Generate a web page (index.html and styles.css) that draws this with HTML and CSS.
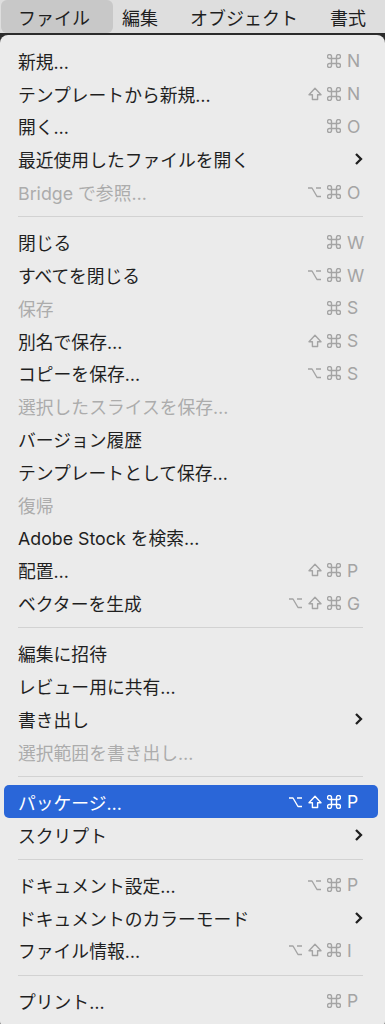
FILE: index.html
```html
<!DOCTYPE html>
<html lang="ja">
<head>
    <meta charset="UTF-8">
    <meta name="viewport" content="width=device-width, initial-scale=1.0">
    <title>ファイル メニュー</title>
    <link rel="stylesheet" href="styles.css">
</head>
<body>
    <!-- キー記号 -->
    <svg class="defs" width="0" height="0">
        <symbol id="cmd" viewBox="0 0 14 14">
            <path d="M4.5 4.5 V2.5 A2 2 0 1 0 2.5 4.5 H11.5 A2 2 0 1 0 9.5 2.5 V11.5 A2 2 0 1 0 11.5 9.5 H2.5 A2 2 0 1 0 4.5 11.5 Z"/>
        </symbol>
        <symbol id="opt" viewBox="0 0 15 14">
            <path d="M1 3 H5 L10 11.5 H14 M9 3 H14"/>
        </symbol>
        <symbol id="shift" viewBox="0 0 14 14">
            <path d="M7 1.3 L13 7.8 H9.6 V12.5 H4.4 V7.8 H1 Z"/>
        </symbol>
    </svg>

    <!-- メニューバー -->
    <div class="menubar">
        <span class="menubar-item active">ファイル</span>
        <span class="menubar-item">編集</span>
        <span class="menubar-item">オブジェクト</span>
        <span class="menubar-item">書式</span>
    </div>

    <!-- ファイル メニュー -->
    <div class="menu">
        <div class="item"><span class="label">新規…</span><span class="shortcut"><svg class="mod"><use href="#cmd"/></svg><span class="key">N</span></span></div>
        <div class="item"><span class="label">テンプレートから新規…</span><span class="shortcut"><svg class="mod"><use href="#shift"/></svg><svg class="mod"><use href="#cmd"/></svg><span class="key">N</span></span></div>
        <div class="item"><span class="label">開く…</span><span class="shortcut"><svg class="mod"><use href="#cmd"/></svg><span class="key">O</span></span></div>
        <div class="item"><span class="label">最近使用したファイルを開く</span><svg class="chevron" viewBox="0 0 9 14"><path d="M2 2 L7 7 L2 12"/></svg></div>
        <div class="item disabled"><span class="label">Bridge で参照…</span><span class="shortcut"><svg class="mod opt"><use href="#opt"/></svg><svg class="mod"><use href="#cmd"/></svg><span class="key">O</span></span></div>
        <div class="sep"></div>

        <div class="item"><span class="label">閉じる</span><span class="shortcut"><svg class="mod"><use href="#cmd"/></svg><span class="key">W</span></span></div>
        <div class="item"><span class="label">すべてを閉じる</span><span class="shortcut"><svg class="mod opt"><use href="#opt"/></svg><svg class="mod"><use href="#cmd"/></svg><span class="key">W</span></span></div>
        <div class="item disabled"><span class="label">保存</span><span class="shortcut"><svg class="mod"><use href="#cmd"/></svg><span class="key">S</span></span></div>
        <div class="item"><span class="label">別名で保存…</span><span class="shortcut"><svg class="mod"><use href="#shift"/></svg><svg class="mod"><use href="#cmd"/></svg><span class="key">S</span></span></div>
        <div class="item"><span class="label">コピーを保存…</span><span class="shortcut"><svg class="mod opt"><use href="#opt"/></svg><svg class="mod"><use href="#cmd"/></svg><span class="key">S</span></span></div>
        <div class="item disabled"><span class="label">選択したスライスを保存…</span></div>
        <div class="item"><span class="label">バージョン履歴</span></div>
        <div class="item"><span class="label">テンプレートとして保存…</span></div>
        <div class="item disabled"><span class="label">復帰</span></div>
        <div class="item"><span class="label">Adobe Stock を検索…</span></div>
        <div class="item"><span class="label">配置…</span><span class="shortcut"><svg class="mod"><use href="#shift"/></svg><svg class="mod"><use href="#cmd"/></svg><span class="key">P</span></span></div>
        <div class="item"><span class="label">ベクターを生成</span><span class="shortcut"><svg class="mod opt"><use href="#opt"/></svg><svg class="mod"><use href="#shift"/></svg><svg class="mod"><use href="#cmd"/></svg><span class="key">G</span></span></div>
        <div class="sep"></div>

        <div class="item"><span class="label">編集に招待</span></div>
        <div class="item"><span class="label">レビュー用に共有…</span></div>
        <div class="item"><span class="label">書き出し</span><svg class="chevron" viewBox="0 0 9 14"><path d="M2 2 L7 7 L2 12"/></svg></div>
        <div class="item disabled"><span class="label">選択範囲を書き出し…</span></div>
        <div class="sep"></div>

        <div class="item selected"><span class="label">パッケージ…</span><span class="shortcut"><svg class="mod opt"><use href="#opt"/></svg><svg class="mod"><use href="#shift"/></svg><svg class="mod"><use href="#cmd"/></svg><span class="key">P</span></span></div>
        <div class="item"><span class="label">スクリプト</span><svg class="chevron" viewBox="0 0 9 14"><path d="M2 2 L7 7 L2 12"/></svg></div>
        <div class="sep"></div>

        <div class="item"><span class="label">ドキュメント設定…</span><span class="shortcut"><svg class="mod opt"><use href="#opt"/></svg><svg class="mod"><use href="#cmd"/></svg><span class="key">P</span></span></div>
        <div class="item"><span class="label">ドキュメントのカラーモード</span><svg class="chevron" viewBox="0 0 9 14"><path d="M2 2 L7 7 L2 12"/></svg></div>
        <div class="item"><span class="label">ファイル情報…</span><span class="shortcut"><svg class="mod opt"><use href="#opt"/></svg><svg class="mod"><use href="#shift"/></svg><svg class="mod"><use href="#cmd"/></svg><span class="key">I</span></span></div>
        <div class="sep"></div>

        <div class="item"><span class="label">プリント…</span><span class="shortcut"><svg class="mod"><use href="#cmd"/></svg><span class="key">P</span></span></div>
    </div>
</body>
</html>
```

FILE: styles.css
```css
* {
    box-sizing: border-box;
    margin: 0;
    padding: 0;
}

html, body {
    height: 1024px;
    overflow: hidden;
}

body {
    background-color: #2b2b2b;
    font-family: "Inter", "Noto Sans CJK JP", sans-serif;
    color: #1f1f1f;
}

.defs {
    position: absolute;
}

/* メニューバー */
.menubar {
    display: flex;
    align-items: center;
    height: 33px;
    padding-left: 1px;
    background-color: #dedede;
    font-size: 18px;
}

.menubar-item {
    display: flex;
    align-items: center;
    height: 33px;
    padding: 0 16px;
}

.menubar-item.active {
    background-color: #c8c8c8;
    border-radius: 6px;
    padding: 0 23px 0 17px;
    margin-right: -7px;
}

/* メニュー本体 */
.menu {
    margin-top: 2px;
    padding: 9.5px 0 12px;
    background-color: #ebebeb;
    border-radius: 8px;
}

.item {
    display: flex;
    align-items: center;
    justify-content: space-between;
    height: 32.8px;
    margin: 0 7px 0 4px;
    padding: 0 16px 0 14px;
    font-size: 17.8px;
    border-radius: 5px;
}

.item.disabled {
    color: #acacac;
}

.item.selected {
    background-color: #2a66d8;
    color: #fff;
}

.shortcut {
    display: flex;
    align-items: center;
    gap: 5px;
    color: #a4a4a4;
}

.item.selected .shortcut {
    color: #fff;
}

.mod {
    width: 14px;
    height: 14px;
    fill: none;
    stroke: currentColor;
    stroke-width: 1.4;
    stroke-linejoin: round;
}

.mod.opt {
    width: 15px;
}

.key {
    width: 15px;
    margin-left: 1px;
    font-size: 17.5px;
}

.chevron {
    width: 9px;
    height: 14px;
    margin-right: -1px;
}

.chevron path {
    fill: none;
    stroke: #1f1f1f;
    stroke-width: 2.3;
}

.sep {
    height: 1px;
    margin: 8px 22px 8.4px 18px;
    background-color: #d2d2d2;
}
```
